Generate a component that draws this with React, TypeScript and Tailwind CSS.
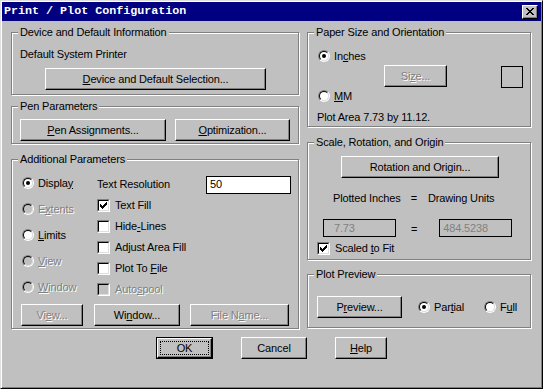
import React from "react";

const DIS = "text-[#808080] [text-shadow:1px_1px_0_#ffffff]";

function U({ children }: { children: React.ReactNode }) {
  return <span className="underline">{children}</span>;
}

function Button({
  className = "",
  disabled = false,
  children,
}: {
  className?: string;
  disabled?: boolean;
  children: React.ReactNode;
}) {
  return (
    <div
      className={`h-[22px] shrink-0 border border-t-white border-l-white border-r-black border-b-black bg-[#c0c0c0] shadow-[inset_-1px_-1px_0_#808080] flex items-center justify-center ${
        disabled ? DIS : "text-black"
      } ${className}`}
    >
      <span>{children}</span>
    </div>
  );
}

function Group({
  label,
  className = "",
  children,
}: {
  label: string;
  className?: string;
  children?: React.ReactNode;
}) {
  return (
    <div
      className={`relative shrink-0 border border-[#808080] shadow-[inset_1px_1px_0_#ffffff,1px_1px_0_#ffffff] ${className}`}
    >
      <span className="absolute left-[6px] top-[-7px] bg-[#c0c0c0] px-[2px] leading-[13px] whitespace-nowrap">
        {label}
      </span>
      {children}
    </div>
  );
}

function Radio({ checked = false, disabled = false }: { checked?: boolean; disabled?: boolean }) {
  return (
    <div className="w-[12px] h-[12px] shrink-0 rounded-full border border-t-[#808080] border-l-[#808080] border-r-white border-b-white">
      <div
        className={`w-full h-full rounded-full border border-t-black border-l-black border-r-[#dfdfdf] border-b-[#dfdfdf] flex items-center justify-center ${
          disabled ? "bg-[#c0c0c0]" : "bg-white"
        }`}
      >
        {checked && <div className="w-[4px] h-[4px] rounded-full bg-black" />}
      </div>
    </div>
  );
}

function Check({ checked = false, disabled = false }: { checked?: boolean; disabled?: boolean }) {
  return (
    <div className="w-[13px] h-[13px] shrink-0 border border-t-[#808080] border-l-[#808080] border-r-white border-b-white">
      <div
        className={`relative w-full h-full border border-t-black border-l-black border-r-[#dfdfdf] border-b-[#dfdfdf] ${
          disabled ? "bg-[#c0c0c0]" : "bg-white"
        }`}
      >
        {checked && (
          <svg
            className="absolute left-[1px] top-[1px]"
            width="7"
            height="7"
            viewBox="0 0 7 7"
            shapeRendering="crispEdges"
          >
            <g fill="#000">
              <rect x="6" y="0" width="1" height="1" />
              <rect x="5" y="1" width="2" height="1" />
              <rect x="0" y="2" width="1" height="1" />
              <rect x="4" y="2" width="3" height="1" />
              <rect x="0" y="3" width="2" height="1" />
              <rect x="3" y="3" width="3" height="1" />
              <rect x="0" y="4" width="5" height="1" />
              <rect x="1" y="5" width="3" height="1" />
              <rect x="2" y="6" width="1" height="1" />
            </g>
          </svg>
        )}
      </div>
    </div>
  );
}

function RadioRow({
  checked,
  disabled,
  children,
}: {
  checked?: boolean;
  disabled?: boolean;
  children: React.ReactNode;
}) {
  return (
    <div className="flex items-center h-[26px] gap-[4px]">
      <Radio checked={checked} disabled={disabled} />
      <span className={disabled ? DIS : ""}>{children}</span>
    </div>
  );
}

function CheckRow({
  checked,
  disabled,
  children,
}: {
  checked?: boolean;
  disabled?: boolean;
  children: React.ReactNode;
}) {
  return (
    <div className="flex items-center h-[21px] gap-[5px]">
      <Check checked={checked} disabled={disabled} />
      <span className={disabled ? DIS : ""}>{children}</span>
    </div>
  );
}

function CloseBtn() {
  return (
    <div className="relative w-[16px] h-[14px] shrink-0 bg-[#c0c0c0] border border-t-white border-l-white border-r-black border-b-black shadow-[inset_-1px_-1px_0_#808080]">
      <svg
        className="absolute left-[3px] top-[2px]"
        width="8"
        height="7"
        viewBox="0 0 8 7"
        shapeRendering="crispEdges"
      >
        <g fill="#000">
          <rect x="0" y="0" width="2" height="1" />
          <rect x="6" y="0" width="2" height="1" />
          <rect x="1" y="1" width="2" height="1" />
          <rect x="5" y="1" width="2" height="1" />
          <rect x="2" y="2" width="4" height="1" />
          <rect x="3" y="3" width="2" height="1" />
          <rect x="2" y="4" width="4" height="1" />
          <rect x="1" y="5" width="2" height="1" />
          <rect x="5" y="5" width="2" height="1" />
          <rect x="0" y="6" width="2" height="1" />
          <rect x="6" y="6" width="2" height="1" />
        </g>
      </svg>
    </div>
  );
}

export default function App() {
  return (
    <div className="w-[543px] h-[389px] overflow-hidden bg-[#c0c0c0] border border-t-[#dfdfdf] border-l-[#dfdfdf] border-r-black border-b-black shadow-[inset_1px_1px_0_#ffffff,inset_-1px_-1px_0_#808080] p-[1px] font-['Liberation_Sans',Arial,sans-serif] text-[11px] leading-[13px] tracking-[-0.15px] text-black">
      {/* Title bar */}
      <div className="h-[19px] bg-[#000080] flex items-center justify-between pl-[2px] pr-[3px]">
        <span className="font-['Liberation_Mono',monospace] font-bold text-[11.7px] tracking-normal leading-none text-white whitespace-nowrap">
          Print / Plot Configuration
        </span>
        <CloseBtn />
      </div>

      {/* Body */}
      <div className="flex gap-[8px] mt-[11px] pl-[9px]">
        {/* Left column */}
        <div className="w-[288px] shrink-0 flex flex-col">
          <Group label="Device and Default Information" className="h-[63px]">
            <div className="pt-[15px] pl-[8px]">Default System Printer</div>
            <Button className="w-[221px] ml-[33px] mt-[7px]">
              <U>D</U>evice and Default Selection...
            </Button>
          </Group>

          <Group label="Pen Parameters" className="h-[38px] mt-[11px]">
            <div className="flex gap-[9px] pt-[12px] pl-[8px]">
              <Button className="w-[146px]">
                <U>P</U>en Assignments...
              </Button>
              <Button className="w-[115px]">
                <U>O</U>ptimization...
              </Button>
            </div>
          </Group>

          <Group label="Additional Parameters" className="h-[170px] mt-[15px]">
            <div className="flex items-start h-[140px]">
              <div className="w-[85px] shrink-0 pl-[10px] pt-[10px] flex flex-col">
                <RadioRow checked>
                  Displa<U>y</U>
                </RadioRow>
                <RadioRow disabled>
                  E<U>x</U>tents
                </RadioRow>
                <RadioRow>
                  <U>L</U>imits
                </RadioRow>
                <RadioRow disabled>
                  <U>V</U>iew
                </RadioRow>
                <RadioRow disabled>
                  <U>W</U>indow
                </RadioRow>
              </div>
              <div className="w-[194px] shrink-0 pt-[14px] flex flex-col">
                <div className="flex items-center justify-between h-[21px]">
                  <span>Text Resolution</span>
                  <div className="w-[85px] h-[18px] border border-black bg-white pl-[3px] flex items-center">
                    50
                  </div>
                </div>
                <CheckRow checked>Text Fill</CheckRow>
                <CheckRow>
                  Hide<U>-</U>Lines
                </CheckRow>
                <CheckRow>Adjust Area Fill</CheckRow>
                <CheckRow>
                  Plot To <U>F</U>ile
                </CheckRow>
                <CheckRow disabled>
                  Auto<U>s</U>pool
                </CheckRow>
              </div>
            </div>
            <div className="flex pl-[9px] mt-[4px]">
              <Button disabled className="w-[62px]">
                Vi<U>e</U>w...
              </Button>
              <Button className="w-[86px] ml-[11px]">
                Wi<U>n</U>dow...
              </Button>
              <Button disabled className="w-[99px] ml-[10px]">
                File N<U>a</U>me...
              </Button>
            </div>
          </Group>
        </div>

        {/* Right column */}
        <div className="w-[224px] shrink-0 flex flex-col">
          <Group label="Paper Size and Orientation" className="h-[95px]">
            <div className="flex items-center h-[16px] mt-[15px] pl-[10px] gap-[4px]">
              <Radio checked />
              <span>
                In<U>c</U>hes
              </span>
            </div>
            <div className="flex items-start mt-[1px]">
              <Button disabled className="w-[63px] ml-[76px]">
                Si<U>z</U>e...
              </Button>
              <div className="w-[22px] h-[22px] ml-[54px] mt-[1px] border border-black" />
            </div>
            <div className="flex items-center h-[16px] pl-[10px] gap-[4px]">
              <Radio />
              <span>
                <U>M</U>M
              </span>
            </div>
            <div className="mt-[7px] pl-[9px]">Plot Area 7.73 by 11.12.</div>
          </Group>

          <Group label="Scale, Rotation, and Origin" className="h-[118px] mt-[15px]">
            <Button className="w-[158px] ml-[33px] mt-[13px]">Rotation and Origin...</Button>
            <div className="flex mt-[14px]">
              <span className="ml-[25px]">Plotted Inches</span>
              <span className="ml-[10px]">=</span>
              <span className="ml-[11px]">Drawing Units</span>
            </div>
            <div className="flex items-center mt-[14px]">
              <div className="w-[73px] h-[18px] ml-[15px] border border-black pl-[10px] flex items-center text-[#808080]">
                7.73
              </div>
              <span className="ml-[15px] mt-[2px]">=</span>
              <div className="w-[73px] h-[18px] ml-[22px] border border-black pl-[3px] flex items-center text-[#808080]">
                484.5238
              </div>
            </div>
            <div className="flex items-center gap-[5px] mt-[5px] ml-[9px]">
              <Check checked />
              <span>
                Scaled <U>t</U>o Fit
              </span>
            </div>
          </Group>

          <Group label="Plot Preview" className="h-[54px] mt-[14px]">
            <div className="flex items-center mt-[21px] pl-[9px]">
              <Button className="w-[85px]">
                P<U>r</U>eview...
              </Button>
              <div className="flex items-center gap-[4px] w-[66px] ml-[16px]">
                <Radio checked />
                <span>
                  Par<U>t</U>ial
                </span>
              </div>
              <div className="flex items-center gap-[4px]">
                <Radio />
                <span>
                  F<U>u</U>ll
                </span>
              </div>
            </div>
          </Group>
        </div>
      </div>

      {/* Bottom buttons */}
      <div className="flex pl-[154px] mt-[8px]">
        <div className="w-[57px] h-[22px] shrink-0 border border-black">
          <div className="relative w-full h-full border border-t-white border-l-white border-r-black border-b-black shadow-[inset_-1px_-1px_0_#808080] flex items-center justify-center">
            <div className="absolute inset-[2px] border border-dotted border-black" />
            <span>OK</span>
          </div>
        </div>
        <Button className="w-[66px] ml-[28px]">Cancel</Button>
        <Button className="w-[52px] ml-[28px]">
          <U>H</U>elp
        </Button>
      </div>
    </div>
  );
}
